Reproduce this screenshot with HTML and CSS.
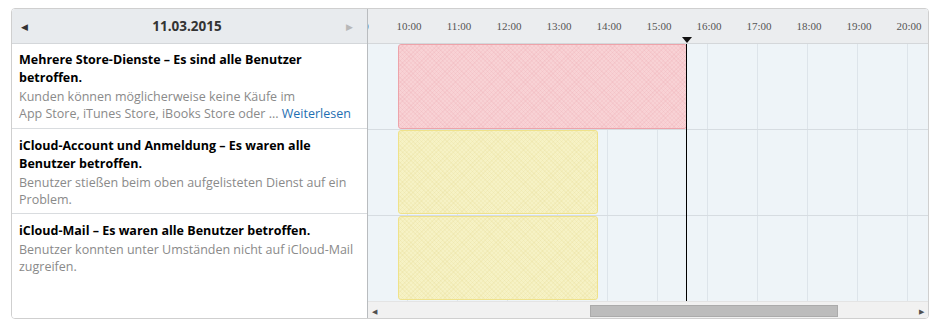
FILE: index.html
```html
<!DOCTYPE html>
<html lang="de">
<head>
    <meta charset="UTF-8">
    <title>Systemstatus</title>
    <link rel="stylesheet" href="styles.css">
</head>
<body>
    <div class="widget">
        <div class="side">
            <div class="side-head">
                <span class="nav">&#9664;</span>
                <span class="date">11.03.2015</span>
                <span class="nav off">&#9654;</span>
            </div>
            <div class="item">
                <p class="title">Mehrere Store-Dienste – Es sind alle Benutzer betroffen.</p>
                <p class="desc">Kunden können möglicherweise keine Käufe im App&nbsp;Store, iTunes Store, iBooks Store oder ... <a href="#">Weiterlesen</a></p>
            </div>
            <div class="item">
                <p class="title">iCloud-Account und Anmeldung – Es waren alle Benutzer betroffen.</p>
                <p class="desc">Benutzer stießen beim oben aufgelisteten Dienst auf ein Problem.</p>
            </div>
            <div class="item last">
                <p class="title">iCloud-Mail – Es waren alle Benutzer betroffen.</p>
                <p class="desc">Benutzer konnten unter Umständen nicht auf iCloud-Mail zugreifen.</p>
            </div>
        </div>

        <div class="chart">
            <div class="scale">
                <span>9:00</span><span>10:00</span><span>11:00</span><span>12:00</span>
                <span>13:00</span><span>14:00</span><span>15:00</span><span>16:00</span>
                <span>17:00</span><span>18:00</span><span>19:00</span><span>20:00</span>
            </div>
            <div class="rows">
                <div class="row"></div>
                <div class="row"></div>
                <div class="row last"></div>
                <!-- events, placed by time: 50px per hour, 10:00 at 39px -->
                <div class="event red" style="left: 30px; top: 0; width: 289px; height: 85px;"></div>
                <div class="event yellow" style="left: 30px; top: 86px; width: 200px; height: 84px;"></div>
                <div class="event yellow" style="left: 30px; top: 172px; width: 200px; height: 84px;"></div>
                <div class="now" style="left: 318px;"></div>
            </div>
            <div class="marker" style="left: 314px;"></div>
            <div class="scrollbar">
                <span class="arrow">&#9664;</span>
                <div class="track"><div class="thumb"></div></div>
                <span class="arrow">&#9654;</span>
            </div>
        </div>
    </div>
</body>
</html>
```

FILE: styles.css
```css
/* General Styles */
body {
    margin: 0;
    padding: 8px 0 0 11px;
    background-color: #fff;
    font-family: "Open Sans", Arial, sans-serif;
}

/* Widget frame */
.widget {
    display: flex;
    width: 918px;
    height: 311px;
    box-sizing: border-box;
    border: 1px solid #cfcfcf;
    border-radius: 4px;
    overflow: hidden;
}

/* Left list */
.side {
    width: 355px;
    flex-shrink: 0;
    display: flex;
    flex-direction: column;
    border-right: 1px solid #b9bcbf;
    background-color: #fff;
}
.side-head {
    height: 34px;
    display: flex;
    align-items: center;
    justify-content: space-between;
    padding: 0 14px 0 9px;
    background-color: #e8ebee;
    border-bottom: 1px solid #d4d7da;
}
.nav {
    font-size: 9px;
    color: #333;
}
.nav.off {
    color: #b8b8b8;
}
.date {
    font-size: 13.5px;
    font-weight: bold;
    color: #333;
}
.item {
    height: 85px;
    box-sizing: border-box;
    padding: 7px 11px 0 7px;
    border-bottom: 1px solid #d9dcdf;
}
.item + .item {
    padding-top: 8px;
}
.item.last {
    flex: 1;
    border-bottom: none;
}
.title {
    margin: 0;
    font-size: 12.5px;
    font-weight: bold;
    line-height: 18px;
    color: #000;
}
.desc {
    margin: 2px 0 0;
    font-size: 12.5px;
    line-height: 16.5px;
    color: #8a8a8a;
}
.desc a {
    color: #1f6fb2;
    text-decoration: none;
}

/* Timeline */
.chart {
    flex: 1;
    position: relative;
    display: flex;
    flex-direction: column;
    overflow: hidden;
    background-color: #eef4f8;
}
.scale {
    height: 34px;
    flex-shrink: 0;
    display: flex;
    align-items: center;
    margin-left: -34px;
    background-color: #ebedef;
    border-bottom: 1px solid #d4d7da;
    font-family: "Liberation Serif", "Times New Roman", serif;
    font-size: 11px;
    color: #555;
}
.scale span {
    width: 50px;
    flex-shrink: 0;
    text-align: center;
}
.rows {
    position: relative;
    flex: 1;
    background-image: linear-gradient(to right, #dde4ea 1px, transparent 1px);
    background-size: 50px 100%;
    background-position: 39px 0;
}
.row {
    height: 85px;
    border-bottom: 1px solid #d6dce1;
}
.row.last {
    border-bottom: none;
}

/* Events */
.event {
    position: absolute;
    border: 1px solid;
    border-radius: 3px;
    box-sizing: border-box;
}
.event.red {
    background-color: #f8d2d5;
    border-color: #eda3aa;
    background-image:
        repeating-linear-gradient(45deg, rgba(230, 150, 160, 0.14) 0 1px, transparent 1px 3px),
        repeating-linear-gradient(-45deg, rgba(230, 150, 160, 0.14) 0 1px, transparent 1px 3px);
}
.event.yellow {
    background-color: #f6f2c5;
    border-color: #efe28a;
    background-image:
        repeating-linear-gradient(45deg, rgba(220, 205, 120, 0.14) 0 1px, transparent 1px 3px),
        repeating-linear-gradient(-45deg, rgba(220, 205, 120, 0.14) 0 1px, transparent 1px 3px);
}
.now {
    position: absolute;
    top: 0;
    bottom: 0;
    width: 1px;
    background-color: #000;
}
.marker {
    position: absolute;
    top: 28px;
    width: 0;
    height: 0;
    border-left: 5px solid transparent;
    border-right: 5px solid transparent;
    border-top: 6px solid #111;
}

/* Scrollbar */
.scrollbar {
    height: 18px;
    flex-shrink: 0;
    display: flex;
    align-items: center;
    gap: 4px;
    padding: 0 4px;
    background-color: #f1f1f1;
    border-top: 1px solid #e4e4e4;
}
.arrow {
    font-size: 7px;
    color: #505050;
}
.track {
    flex: 1;
    height: 12px;
}
.thumb {
    margin-left: 209px;
    width: 248px;
    height: 12px;
    box-sizing: border-box;
    background-color: #bcbcbc;
    border: 1px solid #ababab;
}
```
